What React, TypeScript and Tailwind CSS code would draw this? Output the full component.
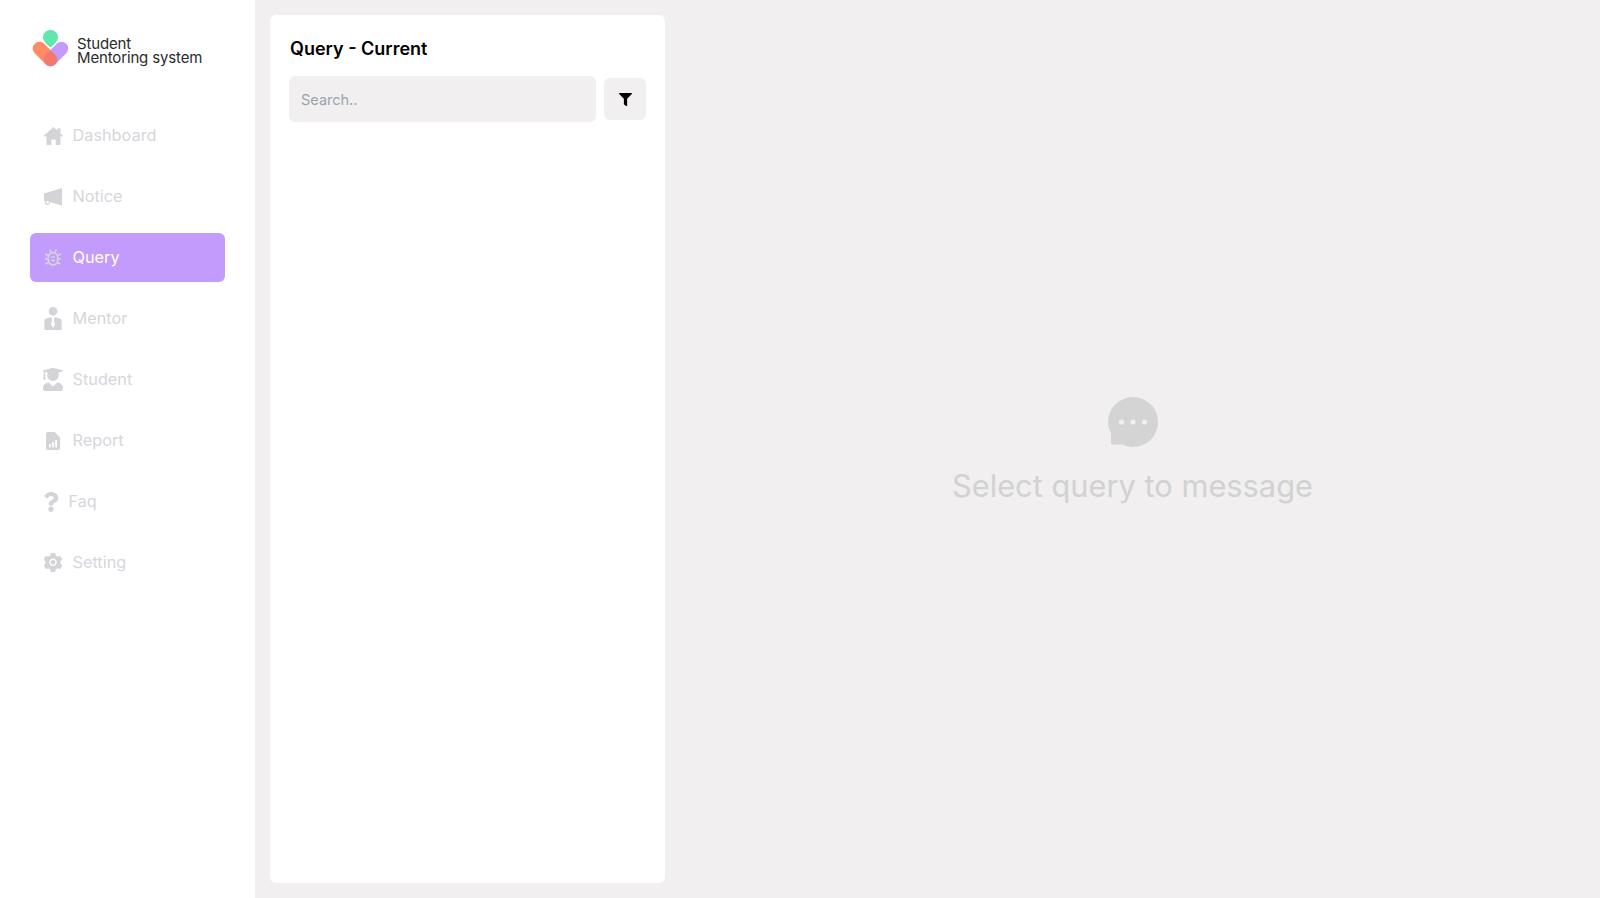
import React from "react";
import { FaUserGraduate, FaQuestion, FaFilter } from "react-icons/fa";
import { AiFillSetting } from "react-icons/ai";

type IconProps = { className?: string };

function HomeIcon({ className }: IconProps) {
  return (
    <svg viewBox="0 0 19 18" className={className} fill="currentColor">
      <path d="M9.500 0L13.500 3.600V1.500H16.500V6.300L19 8.600L18 10L16.500 8.800V17C16.500 17.600 16.100 18 15.500 18H11.700V12.500H7.300V18H3.500C2.900 18 2.500 17.600 2.500 17V8.800L1 10L0 8.600Z" />
    </svg>
  );
}

function MegaphoneIcon({ className }: IconProps) {
  return (
    <svg viewBox="0 0 18 18" className={className} fill="currentColor">
      <path d="M18 0V17.500L6.300 14.200C6.200 16 4.900 17 3.500 17C2 17 0.800 15.800 0.900 14.200L0.900 12.800L0 12.500V5.500Z" />
      <circle cx="3.600" cy="14.200" r="1.300" fill="#ffffff" />
    </svg>
  );
}

function BugIcon({ className }: IconProps) {
  return (
    <svg viewBox="0 0 16 17" className={className} fill="none" stroke="currentColor" strokeWidth="1.500">
      <rect x="3.300" y="3.700" width="9.400" height="12.300" rx="4.700" strokeWidth="1.700" />
      <path d="M6 8H10M6 11.500H10" />
      <path d="M4.500 0.500L6 3M11.500 0.500L10 3M0 5L3.200 6.500M16 5L12.800 6.500M0 10H3M16 10H13M0.500 15L3.500 13.500M15.500 15L12.500 13.500" />
    </svg>
  );
}

function TieIcon({ className }: IconProps) {
  return (
    <svg viewBox="0 0 18 24" className={className} fill="currentColor">
      <circle cx="9" cy="4.500" r="4.500" />
      <path d="M6.800 10.500L1.200 12.200C0.400 12.500 0 13.100 0 14V24H18V14C18 13.100 17.600 12.500 16.800 12.200L11.200 10.500L9.900 13L11 18.500L9 22L7 18.500L8.100 13Z" />
    </svg>
  );
}

function ReportIcon({ className }: IconProps) {
  return (
    <svg viewBox="0 0 14 18" className={className}>
      <path d="M2 0H8.500L14 5.500V16C14 17.100 13.100 18 12 18H2C0.900 18 0 17.100 0 16V2C0 0.900 0.900 0 2 0Z" fill="currentColor" />
      <rect x="3" y="12" width="1.800" height="3.500" fill="#ffffff" />
      <rect x="6.100" y="10" width="1.800" height="5.500" fill="#ffffff" />
      <rect x="9.200" y="8" width="1.800" height="7.500" fill="#ffffff" />
    </svg>
  );
}

const items = [
  { label: "Dashboard", icon: <HomeIcon className="h-[18px] w-[19px]" /> },
  { label: "Notice", icon: <MegaphoneIcon className="h-[18px] w-[18px]" /> },
  { label: "Query", icon: <BugIcon className="h-[17px] w-[16px]" />, active: true },
  { label: "Mentor", icon: <TieIcon className="h-[23px] w-[18px]" /> },
  { label: "Student", icon: <FaUserGraduate className="h-[23px] w-[23px]" /> },
  { label: "Report", icon: <ReportIcon className="h-[18px] w-[14px]" /> },
  { label: "Faq", icon: <FaQuestion className="h-[20px] w-[20px]" />, small: true },
  { label: "Setting", icon: <AiFillSetting className="h-[23px] w-[23px]" /> },
];

function Logo() {
  return (
    <svg width="37" height="37" viewBox="0 0 37 37" className="shrink-0">
      <path d="M18.500 0C22.700 0 26 3.300 26 7.500C26 11 21.500 15 18.500 17.500C15.500 15 11 11 11 7.500C11 3.300 14.300 0 18.500 0Z" fill="#60e6ae" />
      <line x1="7.500" y1="18.500" x2="18.500" y2="29.500" stroke="#ff8a64" strokeWidth="13.500" strokeLinecap="round" />
      <line x1="29.500" y1="18.500" x2="18.500" y2="29.500" stroke="#c39bfd" strokeWidth="13.500" strokeLinecap="round" />
      <path d="M18.500 19.950L23.270 24.730A6.750 6.750 0 1 1 13.730 24.730Z" fill="#f5786c" />
    </svg>
  );
}

export default function App() {
  return (
    <div className="flex h-[898px] w-[1600px] overflow-hidden bg-[#f1eff0] font-['Inter',sans-serif]">
      <aside className="w-[255px] shrink-0 bg-white px-[30px]">
        <div className="flex h-[101px] items-start gap-[8px] pl-[2px] pt-[30px]">
          <Logo />
          <div className="pt-[7px] text-[15px] leading-[14px] tracking-[-0.15px] text-[#2b2b2b]">
            <div>Student</div>
            <div>Mentoring system</div>
          </div>
        </div>
        <nav className="flex flex-col gap-[12px] pt-[10px]">
          {items.map((it) => (
            <div
              key={it.label}
              className={`flex h-[49px] items-center rounded-[6px] text-[16.300px] ${
                it.active ? "bg-[#c39bfd] text-white" : "text-[#d6d6db]"
              } ${it.small ? "gap-[7.500px] pl-[11px]" : "gap-[8.500px] pl-[12px]"}`}
            >
              <span className={`flex items-center justify-center ${it.small ? "w-[20px]" : "w-[22px]"} ${it.active ? "text-[#d5d5d5]" : "text-[#d3d3d8]"}`}>
                {it.icon}
              </span>
              <span>{it.label}</span>
            </div>
          ))}
        </nav>
      </aside>
      <main className="flex min-w-0 flex-1">
        <section className="ml-[15px] mt-[15px] h-[868px] w-[395px] shrink-0 rounded-[6px] bg-white px-[19px]">
          <h1 className="ml-[1px] mt-[19.500px] text-[18px] font-semibold leading-[28px] text-black">Query - Current</h1>
          <div className="mt-[13.500px] flex items-center gap-[8px]">
            <div className="flex h-[46px] w-[307px] items-center rounded-[6px] bg-[#f1eff0] px-[12px] pt-[1px] text-[14.500px] text-[#9ca3af]">Search..</div>
            <button className="flex h-[42px] w-[42px] items-center justify-center rounded-[6px] bg-[#f1eff0] text-black">
              <FaFilter className="h-[13px] w-[13px]" />
            </button>
          </div>
        </section>
        <div className="flex flex-1 flex-col items-center pt-[397px]">
          <svg width="50" height="50" viewBox="0 0 50 50">
            <path d="M25 0a25 25 0 0 1 0 50c-4 0-7.500-1-10.500-2.500H5a2 2 0 0 1-2-2v-10C1 32 0 29 0 25A25 25 0 0 1 25 0z" fill="#d4d4d4" />
            <circle cx="13.500" cy="25" r="2.600" fill="#f1eff0" />
            <circle cx="25" cy="25" r="2.600" fill="#f1eff0" />
            <circle cx="36.500" cy="25" r="2.600" fill="#f1eff0" />
          </svg>
          <div className="mt-[20px] text-[30.800px] leading-[38px] text-[#d2d2d2]">Select query to message</div>
        </div>
      </main>
    </div>
  );
}
